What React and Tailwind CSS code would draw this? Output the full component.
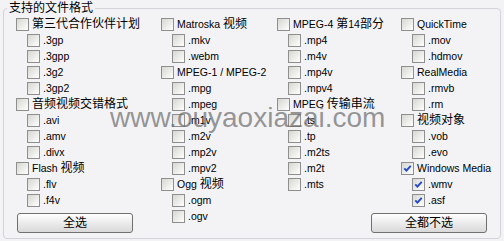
import React from 'react';

const columns = [
  {
    width: 'w-[145px]',
    groups: [
      { label: '第三代合作伙伴计划', items: ['.3gp', '.3gpp', '.3g2', '.3gp2'] },
      { label: '音频视频交错格式', items: ['.avi', '.amv', '.divx'] },
      { label: 'Flash 视频', items: ['.flv', '.f4v'] },
    ],
  },
  {
    width: 'w-[116px]',
    groups: [
      { label: 'Matroska 视频', items: ['.mkv', '.webm'] },
      { label: 'MPEG-1 / MPEG-2', items: ['.mpg', '.mpeg', '.m1v', '.m2v', '.mp2v', '.mpv2'] },
      { label: 'Ogg 视频', items: ['.ogm', '.ogv'] },
    ],
  },
  {
    width: 'w-[124px]',
    groups: [
      { label: 'MPEG-4 第14部分', items: ['.mp4', '.m4v', '.mp4v', '.mpv4'] },
      { label: 'MPEG 传输串流', items: ['.ts', '.tp', '.m2ts', '.m2t', '.mts'] },
    ],
  },
  {
    width: 'flex-1',
    groups: [
      { label: 'QuickTime', items: ['.mov', '.hdmov'] },
      { label: 'RealMedia', items: ['.rmvb', '.rm'] },
      { label: '视频对象', items: ['.vob', '.evo'] },
      { label: 'Windows Media', items: ['.wmv', '.asf'], checked: true },
    ],
  },
];

// CJK parts get 12px, latin parts stay small like Tahoma 8pt
function Txt({ text }) {
  return text.split(/([\u4e00-\u9fff]+)/).filter(Boolean).map((part, i) =>
    /[\u4e00-\u9fff]/.test(part)
      ? <span key={i} className="text-[12px]">{part}</span>
      : <span key={i}>{part}</span>
  );
}

function Check({ checked }) {
  return (
    <span className="relative w-[13px] h-[13px] shrink-0 border border-[#8f8f8f] bg-linear-to-br from-[#d6d6d2] to-white">
      {checked && (
        <svg viewBox="0 0 11 11" className="absolute inset-0 w-[11px] h-[11px]">
          <path d="M2.3 5.4 L4.4 7.6 L8.7 2.8" fill="none" stroke="#2149c9" strokeWidth="1.9" />
        </svg>
      )}
    </span>
  );
}

function Row({ label, checked, sub }) {
  return (
    <div className={`flex items-center h-4 gap-[3px] whitespace-nowrap ${sub ? 'pl-[11px]' : ''}`}>
      <Check checked={checked} />
      <span className="leading-4 text-black"><Txt text={label} /></span>
    </div>
  );
}

function XpButton({ children, className }) {
  return (
    <button className={`h-[20px] w-[116px] rounded-[3px] border border-[#707070] bg-linear-to-b from-[#fefefe] to-[#d9d9d9] text-[12px] leading-none text-black ${className}`}>
      {children}
    </button>
  );
}

export default function App() {
  return (
    <div
      className="w-[504px] h-[241px] bg-[#f3f3f6] pt-[8px] pl-[3px] text-[10.5px] overflow-hidden relative"
      style={{ fontFamily: '"Liberation Sans", "Noto Sans CJK SC", sans-serif' }}
    >
      <div className="relative w-[498px] h-[231px] border border-[#d3d3da] rounded-[4px] pt-[7px] pl-[12px]">
        <span className="absolute -top-[9px] left-[3px] px-[2px] bg-[#f3f3f6] text-[12px] leading-4 text-black">
          支持的文件格式
        </span>
        <div className="flex">
          {columns.map((col, ci) => (
            <div key={ci} className={`flex flex-col ${col.width}`}>
              {col.groups.map((g) => (
                <React.Fragment key={g.label}>
                  <Row label={g.label} checked={g.checked} />
                  {g.items.map((it) => (
                    <Row key={it} label={it} checked={g.checked} sub />
                  ))}
                </React.Fragment>
              ))}
              {ci === 0 && <XpButton className="mt-[5px] ml-[1px]">全选</XpButton>}
              {ci === 3 && <XpButton className="mt-[5px] -ml-[30px]">全都不选</XpButton>}
            </div>
          ))}
        </div>
      </div>
      <div className="absolute top-[104px] left-[110px] text-[28px] leading-[28px] text-[#6a6a6a]/70 pointer-events-none whitespace-nowrap">
        www.ouyaoxiazai.com
      </div>
    </div>
  );
}
